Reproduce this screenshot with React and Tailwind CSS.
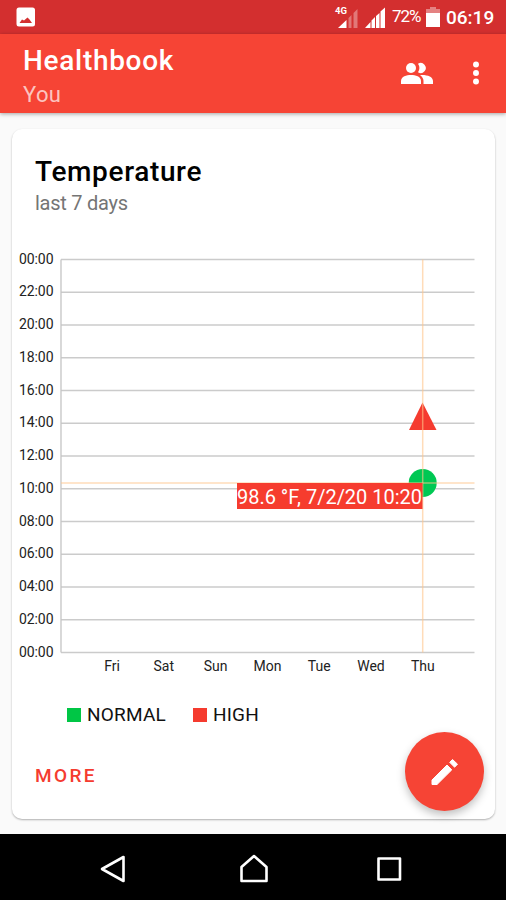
const hours = ['00:00', '22:00', '20:00', '18:00', '16:00', '14:00', '12:00', '10:00', '08:00', '06:00', '04:00', '02:00', '00:00'];
const days = ['Fri', 'Sat', 'Sun', 'Mon', 'Tue', 'Wed', 'Thu'];

const legend = [
    { label: 'NORMAL', color: 'bg-[#00c645]', width: 'w-[126px]' },
    { label: 'HIGH', color: 'bg-[#f53b2f]', width: 'w-auto' },
];

const TOP = 19.5;
const STEP = 32.75;

const StatusBar = () => (
    <div className="flex h-[34px] items-center bg-[#d32f2f] pl-4 pr-[11px] text-white">
        <svg className="h-5 w-5" viewBox="0 0 20 20">
            <rect x="0.5" y="0.5" width="18.5" height="19" rx="2.5" fill="#fff" />
            <path d="M3.500 16 L6 12.500 L8 13.500 L11.500 10.500 L13.500 12.500 L16 16 Z" fill="#d32f2f" />
        </svg>
        <div className="ml-auto flex items-center">
            <svg className="h-6 w-[52px]" viewBox="334 5 52 24">
                <text x="335" y="13.5" fontSize="9.5" fontWeight="700" fill="#fff" textLength="12">4G</text>
                <path d="M338 28 L346.500 20 V28 Z" fill="#fff" />
                <path d="M348.500 18 L351.500 15 V28 H348.500 Z M353.500 13 L357.500 9 V28 H353.500 Z" fill="#fff" opacity="0.35" />
                <path d="M365 28 L370.500 22 V28 Z M371.500 20.500 L375 17 V28 H371.500 Z M376 16 L379.500 13 V28 H376 Z M380.500 11.500 L385 7.500 V28 H380.500 Z" fill="#fff" />
            </svg>
            <span className="ml-[6px] w-[30px] text-[17px] tracking-[-1px]">72%</span>
            <svg className="ml-1 h-5 w-[14px]" viewBox="0 0 14 20">
                <path d="M4 0 H10 V2 H14 V6 H0 V2 H4 Z" fill="#fff" opacity="0.4" />
                <rect y="6" width="14" height="14" fill="#fff" />
            </svg>
            <span className="ml-[6px] w-[49px] pt-[2px] text-[19px] font-medium leading-6">06:19</span>
        </div>
    </div>
);

const AppBar = () => (
    <header className="relative z-10 flex h-[79px] bg-[#f64435] pl-[23px] text-white shadow-[0_1px_4px_rgba(0,0,0,0.35)]">
        <div className="pt-[11px]">
            <h1 className="text-[28px] font-medium leading-8 tracking-[0.7px]">Healthbook</h1>
            <p className="mt-[3px] text-[22px] leading-[30px] tracking-[0.4px] text-white/70">You</p>
        </div>
        <svg className="ml-auto mr-[25px] mt-7 h-6 w-[34px]" viewBox="400 62 34 24" fill="currentColor">
            <circle cx="411" cy="68" r="5" />
            <path d="M418 63.800 a5 5 0 1 1 0 8.400 a7.500 7.500 0 0 0 0 -8.400 Z" />
            <path d="M401 84 V81 C401 76.500 406.500 75 411 75 C415.500 75 421 76.500 421 81 V84 Z" />
            <path d="M420 75 C427 74.500 433 76.500 433 81 V84 H423.500 V81 C423.500 78.500 422 76.500 420 75 Z" />
        </svg>
        <svg className="mr-[13px] mt-[22px] h-[34px] w-[34px]" viewBox="0 0 24 24" fill="currentColor">
            <circle cx="12" cy="6" r="2.100" />
            <circle cx="12" cy="12" r="2.100" />
            <circle cx="12" cy="18" r="2.100" />
        </svg>
    </header>
);

const TemperatureChart = () => (
    <svg className="h-[440px] w-full shrink-0" viewBox="12 240 483 440">
        <g transform="translate(0 240)">
            {hours.map((hour, i) => (
                <g key={i}>
                    <line x1="61" x2="474.5" y1={TOP + i * STEP} y2={TOP + i * STEP} stroke="#cbcbcb" strokeWidth="1.500" />
                    <text x="19" y={TOP + i * STEP + 4} fontSize="14" fill="#222" textLength="34.500">{hour}</text>
                </g>
            ))}
            <line x1="61" x2="61" y1={TOP} y2={TOP + 12 * STEP} stroke="#c4c4c4" strokeWidth="1.300" />
            {days.map((day, i) => (
                <text key={day} x={112 + i * 51.8} y="431" fontSize="14" fill="#222" textAnchor="middle">{day}</text>
            ))}
            <path d="M422.500 162.500 L436.500 190 H409 Z" fill="#f53b2f" />
            <circle cx="422.700" cy="243" r="14" fill="#00c853" />
            {/* highlight crosshair */}
            <line x1="422.700" x2="422.700" y1={TOP} y2={TOP + 12 * STEP} stroke="#ffc48a" strokeOpacity="0.600" strokeWidth="1.500" />
            <line x1="61" x2="474.5" y1="243" y2="243" stroke="#ffc48a" strokeOpacity="0.600" strokeWidth="1.500" />
            <rect x="237" y="243" width="185.500" height="26" fill="#f63c2e" />
            <text x="237" y="264" fontSize="20" fill="#fff" textLength="185">98.6 °F, 7/2/20 10:20</text>
        </g>
    </svg>
);

const NavigationBar = () => (
    <nav className="flex h-[66px] shrink-0 items-center bg-black">
        <svg className="h-full w-full" viewBox="0 834 506 66" fill="none" stroke="#fff" strokeWidth="2.600" strokeLinejoin="round">
            <path d="M102 869 L123.500 857 V881 Z" />
            <path d="M241.500 881 V867 L254 856 L266.500 867 V881 Z" />
            <rect x="378.500" y="858.500" width="21.500" height="21" />
        </svg>
    </nav>
);

const App = () => {
    return (
        <div className="flex h-[900px] w-[506px] flex-col overflow-hidden bg-[#fafafa] font-['Roboto',sans-serif]">
            <StatusBar />
            <AppBar />
            <main className="relative flex-1 px-3 pr-[11px] pt-4">
                <section className="flex h-[690px] flex-col rounded-[10px] bg-white shadow-[0_1px_2px_rgba(0,0,0,0.3)]">
                    <div className="h-[111px] shrink-0 pl-[23px] pt-[27px]">
                        <h2 className="text-[28px] font-medium leading-8 tracking-[0.65px] text-black">Temperature</h2>
                        <p className="mt-[3px] text-[20px] leading-6 tracking-[-0.25px] text-[#757575]">last 7 days</p>
                    </div>
                    <TemperatureChart />
                    <div className="mt-[21px] flex h-7 items-center pl-[55px]">
                        {legend.map((item) => (
                            <div key={item.label} className={`flex items-center ${item.width}`}>
                                <span className={`h-[14px] w-[14px] ${item.color}`} />
                                <span className="ml-[6px] text-[19px] tracking-[0.2px] text-[#111]">{item.label}</span>
                            </div>
                        ))}
                    </div>
                    <button className="ml-[23px] mt-[35px] self-start text-[19px] font-medium leading-6 tracking-[2.4px] text-[#f53b2f]">
                        MORE
                    </button>
                </section>
                <button className="absolute bottom-[23px] right-[22px] flex h-[79px] w-[79px] items-center justify-center rounded-full bg-[#f64435] text-white shadow-[0_4px_9px_rgba(0,0,0,0.25)]">
                    <svg className="h-8 w-8" viewBox="429 755 32 32" fill="currentColor" stroke="currentColor" strokeLinejoin="round">
                        <path d="M432 783.500 V779 L447 764 L451.800 768.800 L437 783.500 Z" />
                        <path d="M449.700 761.300 L452.500 758.500 L457.500 763.200 L454.600 766.200 Z" />
                    </svg>
                </button>
            </main>
            <NavigationBar />
        </div>
    );
};

export default App;
